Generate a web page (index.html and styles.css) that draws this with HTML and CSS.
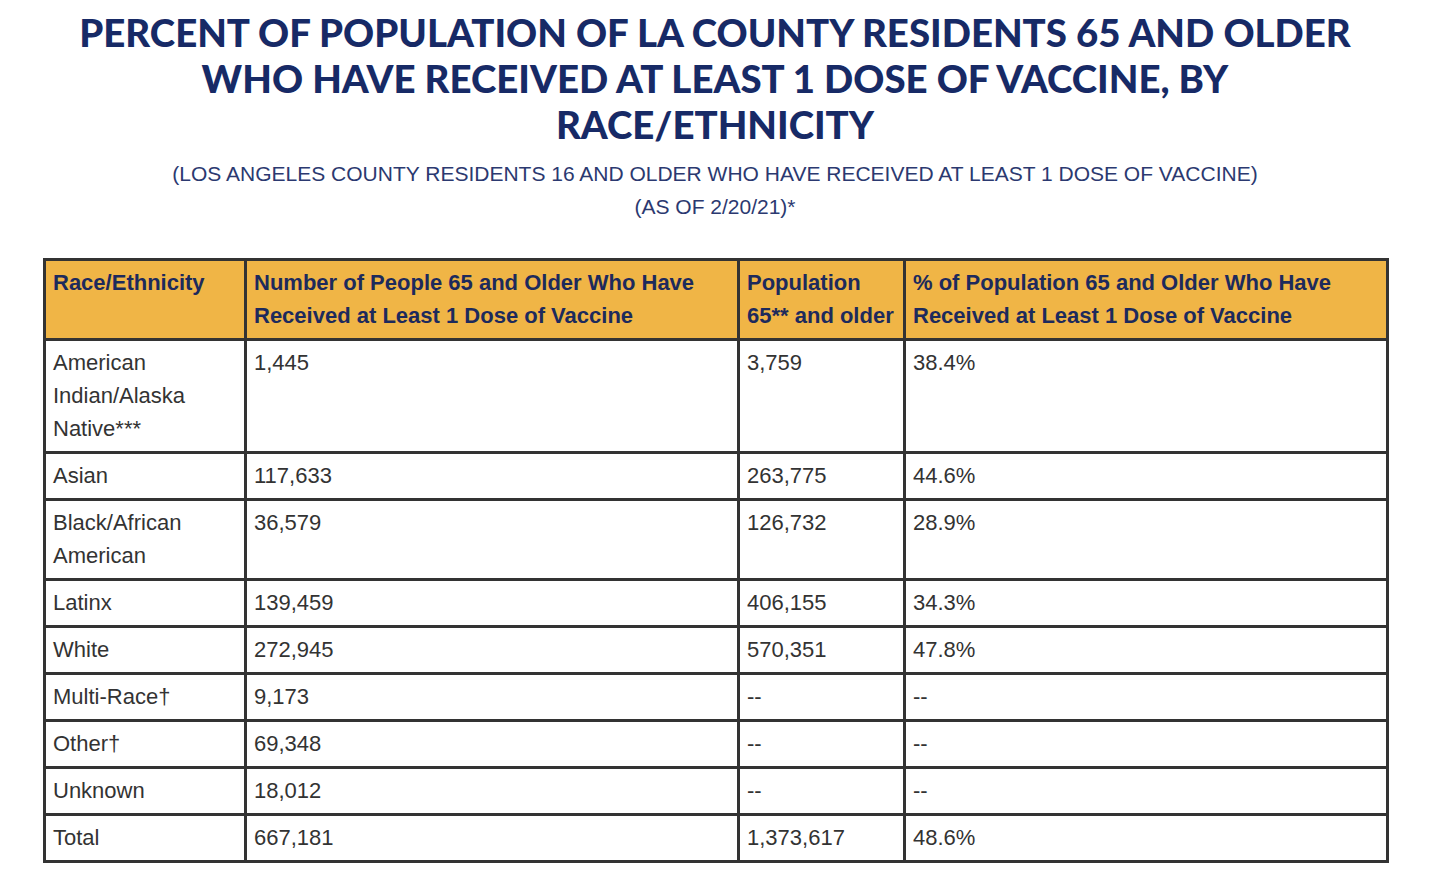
FILE: index.html
```html
<!DOCTYPE html>
<html lang="en">
<head>
<meta charset="utf-8">
<title>Percent of LA County residents 65 and older vaccinated</title>
<link rel="stylesheet" href="styles.css">
</head>
<body>
<main class="page">
  <h1 class="title">PERCENT OF POPULATION OF LA COUNTY RESIDENTS 65 AND OLDER<br>WHO HAVE RECEIVED AT LEAST 1 DOSE OF VACCINE, BY<br>RACE/ETHNICITY</h1>
  <p class="subtitle">(LOS ANGELES COUNTY RESIDENTS 16 AND OLDER WHO HAVE RECEIVED AT LEAST 1 DOSE OF VACCINE)<br>(AS OF 2/20/21)*</p>
  <table class="data">
    <colgroup>
      <col class="c1"><col class="c2"><col class="c3"><col class="c4">
    </colgroup>
    <thead>
      <tr>
        <th>Race/Ethnicity</th>
        <th>Number of People 65 and Older Who Have Received at Least 1 Dose of Vaccine</th>
        <th>Population 65** and older</th>
        <th>% of Population 65 and Older Who Have Received at Least 1 Dose of Vaccine</th>
      </tr>
    </thead>
    <tbody>
      <tr><td>American Indian/Alaska Native***</td><td>1,445</td><td>3,759</td><td>38.4%</td></tr>
      <tr><td>Asian</td><td>117,633</td><td>263,775</td><td>44.6%</td></tr>
      <tr><td>Black/African American</td><td>36,579</td><td>126,732</td><td>28.9%</td></tr>
      <tr><td>Latinx</td><td>139,459</td><td>406,155</td><td>34.3%</td></tr>
      <tr><td>White</td><td>272,945</td><td>570,351</td><td>47.8%</td></tr>
      <tr><td>Multi-Race†</td><td>9,173</td><td>--</td><td>--</td></tr>
      <tr><td>Other†</td><td>69,348</td><td>--</td><td>--</td></tr>
      <tr><td>Unknown</td><td>18,012</td><td>--</td><td>--</td></tr>
      <tr><td>Total</td><td>667,181</td><td>1,373,617</td><td>48.6%</td></tr>
    </tbody>
  </table>
</main>
</body>
</html>
```

FILE: styles.css
```css
html, body {
  margin: 0;
  padding: 0;
  background: #ffffff;
}

.page {
  width: 1430px;
  padding-top: 9px;
  display: flex;
  flex-direction: column;
  align-items: center;
}

.title {
  margin: 0;
  font-family: Lato, "Liberation Sans", sans-serif;
  font-weight: 900;
  font-size: 38.4px;
  line-height: 46px;
  color: #172a66;
  text-align: center;
}

.subtitle {
  margin: 10px 0 0;
  font-family: "Liberation Sans", Arial, sans-serif;
  font-size: 21px;
  line-height: 33px;
  color: #2b3970;
  text-align: center;
}

.data {
  align-self: flex-start;
  margin: 35px 0 0 43px;
  width: 1343px;
  border-collapse: collapse;
  table-layout: fixed;
  font-family: "Liberation Sans", Arial, sans-serif;
  font-size: 22px;
  line-height: 33px;
  color: #333333;
}

.c1 { width: 201px; }
.c2 { width: 493px; }
.c3 { width: 166px; }
.c4 { width: 483px; }

.data th,
.data td {
  border: 3px solid #333333;
  padding: 5px 7px 6px 7px;
  text-align: left;
  vertical-align: top;
}

.data th {
  background: #f0b546;
  color: #1d2a5c;
  font-weight: 700;
}
```
